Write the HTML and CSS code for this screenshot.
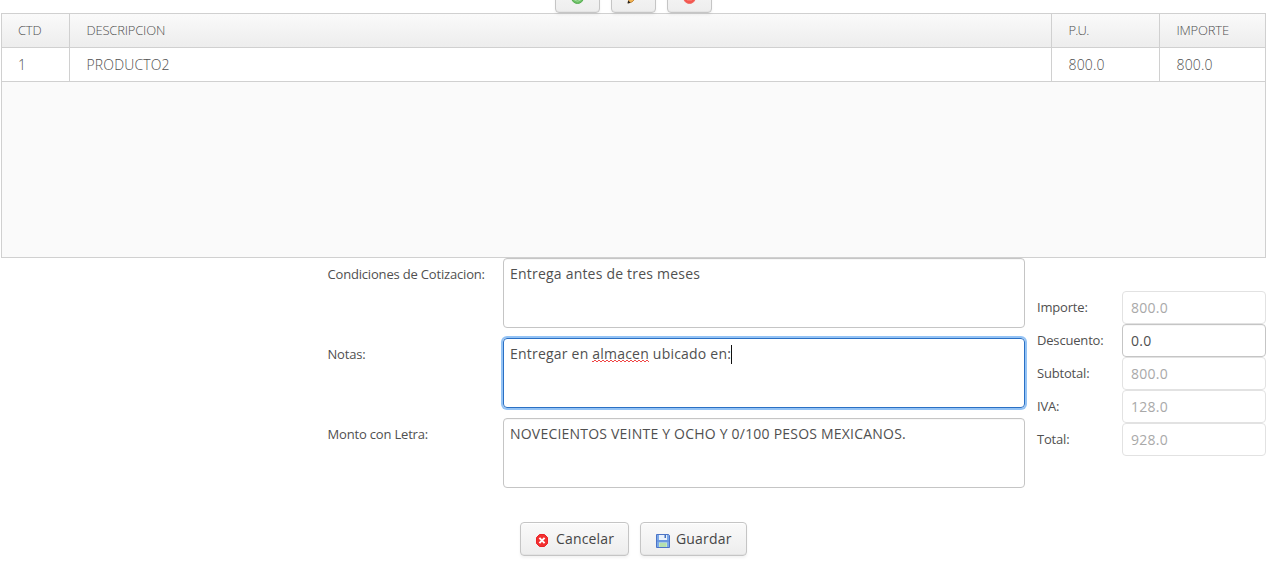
FILE: index.html
```html
<!DOCTYPE html>
<html lang="es">
<head>
<meta charset="utf-8">
<title>Cotizacion</title>
<link rel="stylesheet" href="styles.css">
</head>
<body>
<div class="page">
  <div class="toolbar">
    <div class="tool"><svg width="16" height="16" viewBox="0 0 16 16"><circle cx="7.5" cy="7.5" r="6" fill="#6cc065" stroke="#55ad50"/><circle cx="7.5" cy="7.2" r="4" fill="none" stroke="#a4dca0"/><path d="M7.5 4v6M4.5 7h6" stroke="#fff" stroke-width="2"/></svg></div>
    <div class="tool"><svg width="16" height="16" viewBox="0 0 16 16"><path d="M2 13l1-4 8-8 3 3-8 8z" fill="#f3b552" stroke="#b9792c" stroke-width=".8"/><path d="M4 9.5l8-8" stroke="#ffe3a0" stroke-width="1.2"/><path d="M1.6 13.4l.6-3 2.4 2.4z" fill="#222"/></svg></div>
    <div class="tool"><svg width="16" height="16" viewBox="0 0 16 16"><circle cx="7.5" cy="7.5" r="6" fill="#f4564f" stroke="#ee6a63"/><path d="M4.5 7h6" stroke="#fff" stroke-width="2.4"/><path d="M5 10h5" stroke="#fa8a80"/></svg></div>
  </div>
  <div class="grid">
    <div class="row head"><div class="cell">CTD</div><div class="cell">DESCRIPCION</div><div class="cell price">P.U.</div><div class="cell">IMPORTE</div></div>
    <div class="row"><div class="cell">1</div><div class="cell">PRODUCTO2</div><div class="cell">800.0</div><div class="cell">800.0</div></div>
  </div>
  <div class="form">
    <div class="notes">
      <div class="field"><div class="label">Condiciones de Cotizacion:</div><div class="area">Entrega antes de tres meses</div></div>
      <div class="field"><div class="label">Notas:</div><div class="area focus">Entregar en <span class="misspelled">almacen</span> ubicado en:<span class="caret"></span></div></div>
      <div class="field"><div class="label">Monto con Letra:</div><div class="area">NOVECIENTOS VEINTE Y OCHO Y 0/100 PESOS MEXICANOS.</div></div>
    </div>
    <div class="totals">
      <div class="total"><div class="label">Importe:</div><div class="input disabled">800.0</div></div>
      <div class="total"><div class="label">Descuento:</div><div class="input">0.0</div></div>
      <div class="total"><div class="label">Subtotal:</div><div class="input disabled">800.0</div></div>
      <div class="total"><div class="label">IVA:</div><div class="input disabled">128.0</div></div>
      <div class="total"><div class="label">Total:</div><div class="input disabled">928.0</div></div>
    </div>
  </div>
  <div class="actions">
    <div class="button cancel"><svg width="16" height="16" viewBox="0 0 16 16"><path d="M4.5 1.5h5l3 3v6l-3 3h-5l-3-3v-6z" fill="#f23030" stroke="#ea2328" stroke-linejoin="round"/><path d="M4.4 4.9l5.2 5.2M9.6 4.9l-5.2 5.2" stroke="#fff" stroke-width="2"/></svg><span>Cancelar</span></div>
    <div class="button save"><svg width="16" height="16" viewBox="0 0 16 16"><path d="M1.5 1.5h12l1 1v12h-13z" fill="#7ba8e8" stroke="#4c74c6"/><path d="M4 2h8v5H4z" fill="#eaf2fb"/><path d="M9.5 2h1.5v3H9.5z" fill="#4471be"/><path d="M2 8h12" stroke="#5a87d8"/><path d="M4 9.5h8V14H4z" fill="#d8f0d2"/><path d="M4.5 11h7M4.5 13h7" stroke="#92d08a"/></svg><span>Guardar</span></div>
  </div>
</div>
</body>
</html>
```
FILE: styles.css
```css
* { box-sizing: border-box; }
body { margin: 0; background: #fff; color: #505050; font-family: "Open Sans", sans-serif; font-size: 14px; }
.page { width: 1269px; height: 565px; overflow: hidden; }
.toolbar { height: 13px; display: flex; justify-content: center; align-items: flex-end; gap: 11px; padding-right: 2px; }
.tool, .button { background: linear-gradient(#fafafa, #ededed); border: 1px solid #c5c5c5; border-radius: 4px; box-shadow: inset 0 1px #fff, inset 0 -1px #e4e4e4, 0 2px 3px rgba(0,0,0,.05); }
.tool { width: 45px; height: 35px; flex: none; display: flex; justify-content: center; padding-top: 11px; }
.grid { margin-left: 1px; width: 1265px; height: 245px; border: 1px solid #d0d0d0; background: #fafafa; font-weight: 300; }
.row { display: grid; grid-template-columns: 68px 982px 108px 105px; height: 34px; border-bottom: 1px solid #d0d0d0; background: #fff; line-height: 33px; letter-spacing: .15px; }
.head { background: linear-gradient(#fafafa, #ededed); font-size: 13px; letter-spacing: -.2px; }
.price { letter-spacing: -.8px; }
.cell { padding-left: 16.5px; border-right: 1px solid #d0d0d0; }
.cell:first-child { padding-left: 16px; }
.cell:last-child { border-right: 0; }
.form { display: flex; height: 230px; }
.notes { display: flex; flex-direction: column; gap: 10px; width: 1025px; padding-left: 327.5px; }
.field { display: flex; height: 70px; }
.label { font-size: 13px; line-height: 33px; white-space: nowrap; letter-spacing: -.18px; }
.field .label { width: 175.5px; }
.area { width: 522px; border: 1px solid #c5c5c5; border-radius: 4px; padding: 0 6px; line-height: 29px; box-shadow: inset 0 1px #f7f7f7; white-space: nowrap; letter-spacing: .21px; }
.focus { border-color: #2a70c4; box-shadow: 0 0 0 2px rgba(90,163,240,.65); }
.misspelled { padding-bottom: 1px; background: linear-gradient(135deg, transparent 38%, #f04848 38%, #f04848 62%, transparent 62%) 0 100% / 4px 2px repeat-x, linear-gradient(45deg, transparent 38%, #f04848 38%, #f04848 62%, transparent 62%) 2px 100% / 4px 2px repeat-x; background-position: 0 calc(100% - 2px), 2px calc(100% - 2px); }
.caret { display: inline-block; width: 1px; height: 19px; background: #111; vertical-align: -5px; }
.totals { width: 241px; padding: 33px 0 0 12px; }
.total { display: flex; height: 33px; }
.total .label { width: 85px; }
.input { width: 144px; height: 33px; border: 1px solid #c5c5c5; border-radius: 4px; padding-left: 8px; line-height: 31px; letter-spacing: .25px; box-shadow: inset 0 1px #f7f7f7; }
.disabled { border-color: #e2e2e2; color: #a9a9a9; box-shadow: none; }
.actions { display: flex; gap: 11px; padding: 34px 0 0 520px; }
.button { height: 34px; display: flex; align-items: center; padding-left: 14px; gap: 5px; white-space: nowrap; letter-spacing: .17px; color: #464646; }
.button svg { margin-top: 3px; flex: none; }
.button span { margin-top: -2px; }
.cancel { width: 109px; }
.save { width: 107px; }
```
